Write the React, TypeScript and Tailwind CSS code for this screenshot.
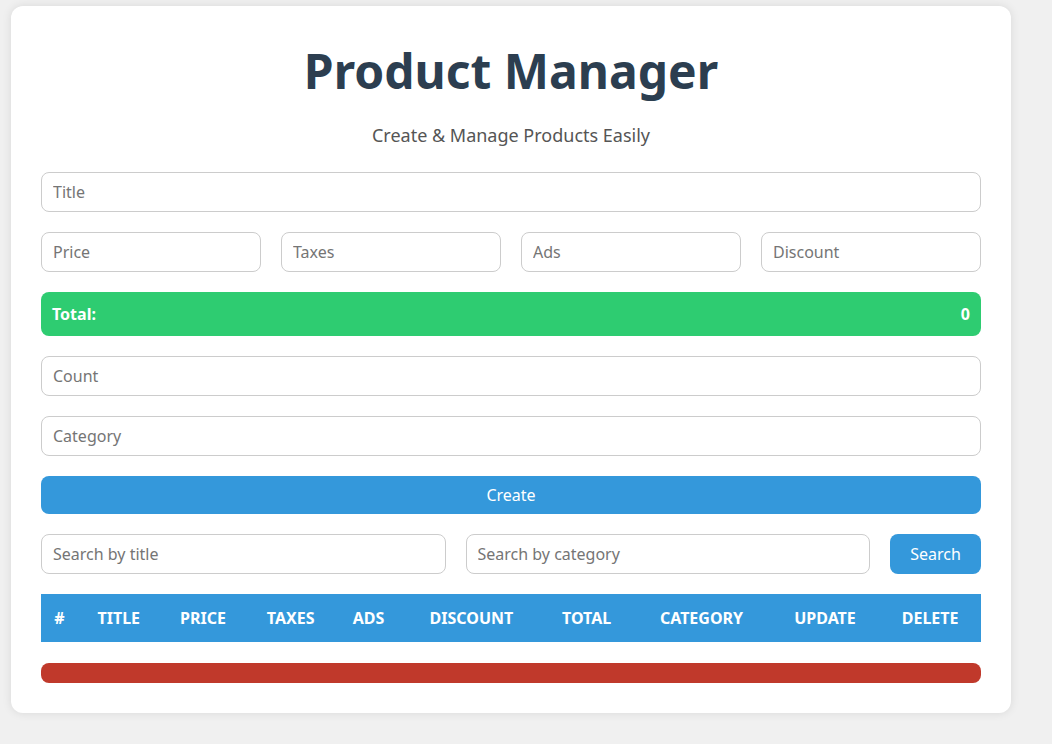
export default function App() {
  const input =
    'w-full h-10 rounded-lg border border-[#cccccc] px-[11px] text-base text-[#333] placeholder:text-[#757575] outline-none';
  const cols = ['#', 'Title', 'Price', 'Taxes', 'Ads', 'Discount', 'Total', 'Category', 'Update', 'Delete'];
  return (
    <div className="min-h-[744px] bg-[#f0f0f0] pl-[11px] pt-[6px] pb-[28px] font-['Liberation_Sans',Arial,sans-serif]">
      <div className="w-[1000px] rounded-xl bg-white px-[30px] pt-[30px] pb-[30px] shadow-[0_0_10px_rgba(0,0,0,0.1)]">
        <h1 className="text-center text-[48px] font-bold leading-[70px] text-[#2c3e50]">Product Manager</h1>
        <p className="mt-[15px] text-center text-lg text-[#555]">Create &amp; Manage Products Easily</p>

        <div className="mt-[23px] flex flex-col gap-5">
          <input className={input} placeholder="Title" />
          <div className="grid grid-cols-4 gap-5">
            <input className={input} placeholder="Price" />
            <input className={input} placeholder="Taxes" />
            <input className={input} placeholder="Ads" />
            <input className={input} placeholder="Discount" />
          </div>
          <div className="flex h-11 items-center justify-between rounded-lg bg-[#2ecc71] px-[11px] text-base font-bold text-white">
            <span>Total:</span>
            <span>0</span>
          </div>
          <input className={input} placeholder="Count" />
          <input className={input} placeholder="Category" />
          <button className="h-[38px] w-full rounded-lg bg-[#3498db] text-base text-white">Create</button>
          <div className="flex gap-5">
            <input className={input} placeholder="Search by title" />
            <input className={input} placeholder="Search by category" />
            <button className="h-10 w-[91px] shrink-0 rounded-lg bg-[#3498db] text-base text-white">Search</button>
          </div>
          <table className="w-full border-collapse">
            <thead>
              <tr className="h-12 bg-[#3498db] text-white">
                {cols.map((c) => (
                  <th key={c} className="px-2 text-center text-base font-bold uppercase">
                    {c}
                  </th>
                ))}
              </tr>
            </thead>
          </table>
          <div className="mt-[1px] h-5 rounded-lg bg-[#c0392b]" />
        </div>
      </div>
    </div>
  );
}
